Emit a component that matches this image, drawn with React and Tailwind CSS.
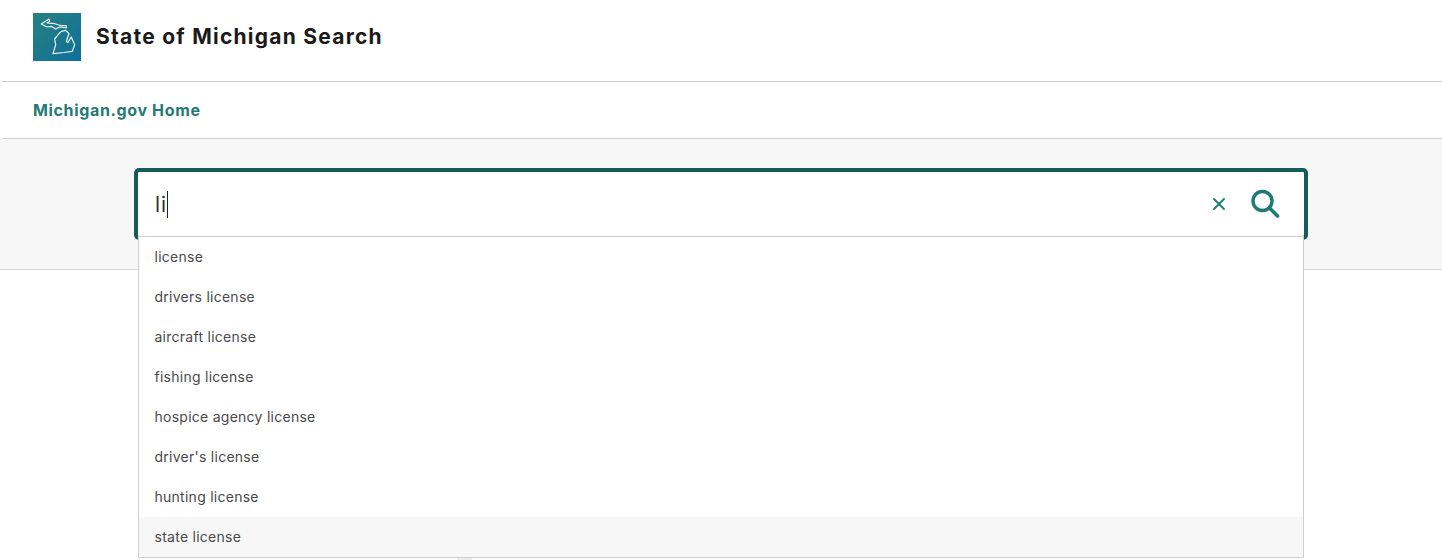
import React from "react";
import { X } from "lucide-react";

const suggestions = [
  "license",
  "drivers license",
  "aircraft license",
  "fishing license",
  "hospice agency license",
  "driver's license",
  "hunting license",
  "state license",
];

function MichiganLogo() {
  return (
    <svg className="h-12 w-12 shrink-0" viewBox="0 0 48 48" fill="none">
      <defs>
        <linearGradient id="logoFill" x1="0" y1="0" x2="1" y2="1">
          <stop offset="0" stopColor="#27817f" />
          <stop offset="1" stopColor="#0f6f9a" />
        </linearGradient>
      </defs>
      <rect width="48" height="48" fill="url(#logoFill)" />
      <path
        d="M8.3 11 L16 6 L16.7 8.3 L14 10 L21.7 10.7 L28.3 12.7 L33.3 12.7 L33.3 15 L26.7 14 L22.7 16 L18.3 13.3 L14 14 Z"
        stroke="#e8f4f4"
        strokeWidth="1.2"
        strokeLinejoin="round"
      />
      <path
        d="M28.3 18.3 L32.7 17.3 L36 20.7 L34.6 24.5 L33.4 28.5 L35 29.5 L38.3 24 L41.7 31.7 L39.3 38.3 L31 39.5 L20 40.7 L22.7 31.7 L21.6 26 L26 20.7 Z"
        stroke="#e8f4f4"
        strokeWidth="1.2"
        strokeLinejoin="round"
      />
    </svg>
  );
}

function SearchIcon() {
  return (
    <svg className="h-[30px] w-[30px]" viewBox="0 0 30 30" fill="none">
      <circle cx="12.5" cy="12" r="9.5" stroke="#1f7a74" strokeWidth="3.4" />
      <path d="M19.5 19 L27.5 27" stroke="#1f7a74" strokeWidth="3.6" strokeLinecap="round" />
    </svg>
  );
}

export default function App() {
  return (
    <div className="h-[560px] overflow-hidden bg-white font-['Inter','Liberation_Sans',sans-serif]">
      <header className="ml-[2px] flex h-[82px] items-start gap-[15px] border-b border-[#d0d0d0] pl-[31px] pt-[13px]">
        <MichiganLogo />
        <h1 className="mt-[11px] text-[21px] leading-[26px] font-bold tracking-[1.25px] text-[#1a1a1a]">
          State of Michigan Search
        </h1>
      </header>
      <nav className="ml-[2px] flex h-[57px] items-center border-b border-[#d0d0d0] pl-[31px]">
        <a className="text-[16px] font-bold tracking-[0.65px] text-[#237a75]">Michigan.gov Home</a>
      </nav>
      <section className="flex h-[131px] items-start justify-center border-b border-[#d8d8d8] bg-[#f7f7f7] pt-[29px]">
        <div className="relative w-[1174px]">
          <div className="flex h-[72px] items-center rounded-[5px] border-4 border-[#135c58] bg-white pl-[17px] pr-[24px]">
            <div className="flex h-[27px] flex-1 items-center pt-[1px]">
              <span className="text-[21px] tracking-[1px] text-[#333]">li</span>
              <span className="h-[27px] w-px bg-[#222]" />
            </div>
            <X className="mr-[21px] h-[20px] w-[20px] text-[#1f7a74]" strokeWidth={2.2} />
            <SearchIcon />
          </div>
          <ul className="absolute top-[68px] left-[4px] w-[1166px] border border-[#cfcfcf] bg-white">
            {suggestions.map((item, i) => (
              <li
                key={item}
                className={`flex h-10 items-center pl-[15.5px] pb-[2px] text-[14px] tracking-[0.26px] text-[#4a4a4a] ${
                  i === suggestions.length - 1 ? "bg-[#f7f7f7]" : ""
                }`}
              >
                {item}
              </li>
            ))}
          </ul>
          <div className="absolute top-[390px] left-[323px] h-[3px] w-[15px] bg-[#ececec]" />
        </div>
      </section>
    </div>
  );
}
